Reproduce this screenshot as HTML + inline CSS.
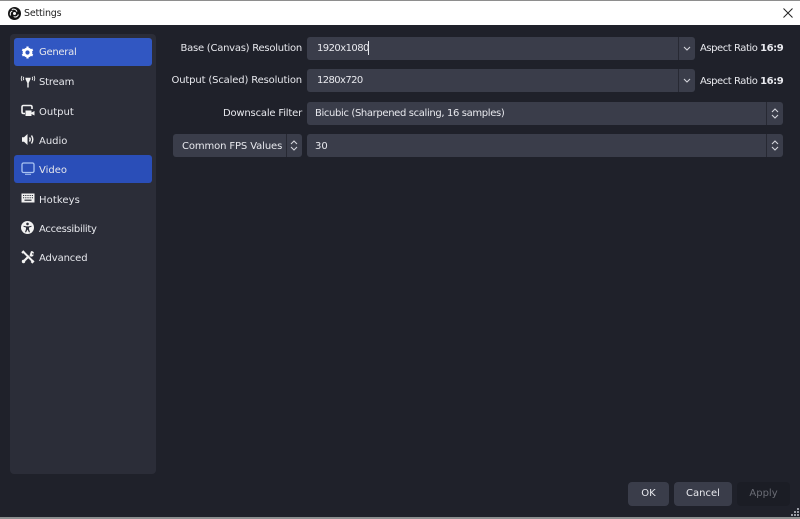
<!DOCTYPE html>
<html><head><meta charset="utf-8"><style>
*{box-sizing:border-box;margin:0;padding:0}
html,body{width:800px;height:519px;overflow:hidden;background:#1f212a}
body{position:relative;font-family:"DejaVu Sans","Liberation Sans",sans-serif;font-size:10px;color:#e8e9ee}
.a{position:absolute}
.t{position:absolute;white-space:nowrap;line-height:14px}
.r{text-align:right}
.item{position:absolute;left:14px;width:138px;height:28px;border-radius:3px}
.lab{position:absolute;left:39px;white-space:nowrap;line-height:14px;color:#e6e7ec}
.box{position:absolute;background:#3a3d4a;border-radius:3px}
.sep{position:absolute;top:0;bottom:0;width:1px;background:#272933}
svg{position:absolute;overflow:visible}
.btn{position:absolute;top:482px;height:24px;border-radius:4px;background:#3a3d4a;text-align:center;line-height:24px}
</style></head><body>
<div class="a" style="left:0;top:0;width:800px;height:1px;background:#8e8e8e"></div>
<div class="a" style="left:0;top:1px;width:800px;height:24px;background:#fff"></div>
<div class="a" style="left:0;top:517px;width:800px;height:2px;background:#8c9090"></div>
<svg style="left:8px;top:6.500px" width="13" height="13" viewBox="0 0 13 13"><circle cx="6.500" cy="6.500" r="6.500" fill="#151515"/><circle cx="6.500" cy="6.500" r="1.500" fill="#fff"/><path d="M3.800 2.500C6 1.600 8.400 2.500 8.900 4.700M10.400 7.500C9.900 9.600 7.500 10.700 5.700 9.500M2.500 8.400C1.800 6.500 2.500 4.500 4.300 4" fill="none" stroke="#fff" stroke-width="1"/></svg>
<div class="t" style="left:24px;top:7px;color:#222;font-size:9.500px;letter-spacing:-.2px">Settings</div>
<svg style="left:783px;top:8px" width="10" height="10" viewBox="0 0 10 10"><path d="M.5 .5L9.500 9.500M9.500 .5L.5 9.500" stroke="#222" stroke-width="1"/></svg>

<div class="a" style="left:10px;top:34px;width:146px;height:440px;background:#2b2d38;border-radius:4px"></div>
<div class="item" style="top:38px;background:#3157c2"></div>
<div class="item" style="top:155px;background:#2a4eb8"></div>

<svg style="left:21px;top:45.500px" width="13" height="13" viewBox="0 0 13 13"><circle cx="6.500" cy="6.500" r="3.500" fill="none" stroke="#fff" stroke-width="2.800"/><path d="M6.500 .5V2.500M6.500 10.500V12.500M1.300 3.500L3 4.500M10 8.500L11.700 9.500M1.300 9.500L3 8.500M10 4.500L11.700 3.500" stroke="#fff" stroke-width="2.200"/></svg>
<div class="lab" style="top:46px;letter-spacing:-.28px">General</div>

<svg style="left:21px;top:75px" width="14" height="13" viewBox="0 0 14 13"><path d="M4.500 3.500H9.500M7 3.500V12.500M5 3.500L6.800 7.500M9 3.500L7.200 7.500" stroke="#f2f2f2" stroke-width="1.400" fill="none"/><path d="M2.800 1.800Q1.800 3.500 2.800 5.200M11.200 1.800Q12.200 3.500 11.200 5.200M1 1Q-.5 3.500 1 6M13 1Q14.500 3.500 13 6" stroke="#e6e6e6" stroke-width=".9" fill="none"/></svg>
<div class="lab" style="top:76px;letter-spacing:-.17px">Stream</div>

<svg style="left:21px;top:104px" width="14" height="13" viewBox="0 0 14 13"><path d="M4 9.500H2.500Q1 9.500 1 8V3Q1 1.500 2.500 1.500H9.500Q11 1.500 11 3V5" fill="none" stroke="#f2f2f2" stroke-width="1.600"/><path d="M4.500 6.500H10.500V12H4.500ZM10.500 8.500L13.500 7V11.500L10.500 10Z" fill="#f2f2f2"/></svg>
<div class="lab" style="top:106px">Output</div>

<svg style="left:21px;top:133px" width="14" height="13" viewBox="0 0 14 13"><path d="M1 4.300H3L6.500 1V12L3 8.700H1Z" fill="#f2f2f2"/><path d="M8.500 4.500Q9.800 6.500 8.500 8.500M10.500 2.500Q13 6.500 10.500 10.500" fill="none" stroke="#f2f2f2" stroke-width="1.400"/></svg>
<div class="lab" style="top:135px">Audio</div>

<svg style="left:21px;top:162px" width="14" height="13" viewBox="0 0 14 13"><rect x="1" y="1" width="12" height="9.500" rx="1.500" fill="none" stroke="#a9c3f2" stroke-width="1.300"/><path d="M4 12.300H10" stroke="#a9c3f2" stroke-width="1"/></svg>
<div class="lab" style="top:164px">Video</div>

<svg style="left:21px;top:193px" width="14" height="10" viewBox="0 0 14 10"><rect x=".5" y=".5" width="13" height="9" fill="#f0f0f0"/><path d="M2 2.500H12M2 4.700H12" stroke="#2b2d38" stroke-width="1" stroke-dasharray="1 .8"/><path d="M3.500 7.200H10.500" stroke="#2b2d38" stroke-width="1.200"/></svg>
<div class="lab" style="top:194px;letter-spacing:.1px">Hotkeys</div>

<svg style="left:21px;top:221px" width="13" height="13" viewBox="0 0 13 13"><circle cx="6.500" cy="6.500" r="6.500" fill="#f2f2f2"/><circle cx="6.500" cy="2.900" r="1.300" fill="#2b2d38"/><path d="M2.500 4.700L5.300 5.400H7.700L10.500 4.700V5.700L8 6.500V8L9 11.200H7.900L6.500 8.500L5.100 11.200H4L5 8V6.500L2.500 5.700Z" fill="#2b2d38"/></svg>
<div class="lab" style="top:223px;letter-spacing:-.3px">Accessibility</div>

<svg style="left:21px;top:250px" width="14" height="14" viewBox="0 0 14 14"><path d="M2 1.500L12 11.500" stroke="#f2f2f2" stroke-width="2"/><path d="M2.500 11.500L8 6" stroke="#f2f2f2" stroke-width="2.200"/><path d="M8.500 5.500L10 1.200Q12.800 1 13 3.500L11 3.300V4.500L12.800 4.600Q12 7 9.500 6.500Z" fill="#f2f2f2"/><path d="M1 3L3 1" stroke="#f2f2f2" stroke-width="2"/><path d="M10.500 12.800L12.700 10.600" stroke="#f2f2f2" stroke-width="2.400"/><circle cx="2.500" cy="11.500" r="1.700" fill="#f2f2f2"/></svg>
<div class="lab" style="top:252px;letter-spacing:-.12px">Advanced</div>

<div class="t r" style="right:498px;top:42px;letter-spacing:-.25px">Base (Canvas) Resolution</div>
<div class="t r" style="right:498px;top:74px;letter-spacing:-.15px">Output (Scaled) Resolution</div>
<div class="t r" style="right:498px;top:107px;letter-spacing:-.19px">Downscale Filter</div>

<div class="box" style="left:307px;top:37px;width:388px;height:23px"><div class="sep" style="left:371px"></div>
<svg style="left:376px;top:9px" width="8" height="5" viewBox="0 0 8 5"><path d="M1 1L4 4L7 1" fill="none" stroke="#d5d6dc" stroke-width="1.100"/></svg></div>
<div class="t" style="left:317px;top:42px;letter-spacing:-.55px">1920x1080</div>
<div class="a" style="left:368px;top:41px;width:1px;height:14px;background:#e8e9ee"></div>
<div class="t" style="left:700px;top:42px;letter-spacing:-.45px">Aspect Ratio <b>16:9</b></div>

<div class="box" style="left:307px;top:69px;width:388px;height:23px"><div class="sep" style="left:371px"></div>
<svg style="left:376px;top:9px" width="8" height="5" viewBox="0 0 8 5"><path d="M1 1L4 4L7 1" fill="none" stroke="#d5d6dc" stroke-width="1.100"/></svg></div>
<div class="t" style="left:317px;top:74px;letter-spacing:-.6px">1280x720</div>
<div class="t" style="left:700px;top:75px;letter-spacing:-.45px">Aspect Ratio <b>16:9</b></div>

<div class="box" style="left:307px;top:102px;width:476px;height:23px"><div class="sep" style="left:459px"></div>
<svg style="left:464px;top:6px" width="8" height="11" viewBox="0 0 8 11"><path d="M1 4L4 1L7 4M1 7L4 10L7 7" fill="none" stroke="#d5d6dc" stroke-width="1.100"/></svg></div>
<div class="t" style="left:315px;top:107px;letter-spacing:-.36px">Bicubic (Sharpened scaling, 16 samples)</div>

<div class="box" style="left:173px;top:134px;width:129px;height:23px"><div class="sep" style="left:113px"></div>
<svg style="left:117px;top:6px" width="8" height="11" viewBox="0 0 8 11"><path d="M1 4L4 1L7 4M1 7L4 10L7 7" fill="none" stroke="#d5d6dc" stroke-width="1.100"/></svg></div>
<div class="t" style="left:182px;top:140px;letter-spacing:-.12px">Common FPS Values</div>

<div class="box" style="left:307px;top:134px;width:476px;height:23px"><div class="sep" style="left:459px"></div>
<svg style="left:464px;top:6px" width="8" height="11" viewBox="0 0 8 11"><path d="M1 4L4 1L7 4M1 7L4 10L7 7" fill="none" stroke="#d5d6dc" stroke-width="1.100"/></svg></div>
<div class="t" style="left:315px;top:140px">30</div>

<div class="btn" style="left:628px;width:41px">OK</div>
<div class="btn" style="left:674px;width:58px">Cancel</div>
<div class="btn" style="left:737px;width:53px;background:#1b1d25;color:#6a6c75">Apply</div>

<svg style="left:791px;top:508px" width="8" height="8" viewBox="0 0 8 8"><path d="M6 0h2v2H6zM3 3h2v2H3zM6 3h2v2H6zM0 6h2v2H0zM3 6h2v2H3zM6 6h2v2H6z" fill="#9a9ca5"/></svg>
</body></html>
